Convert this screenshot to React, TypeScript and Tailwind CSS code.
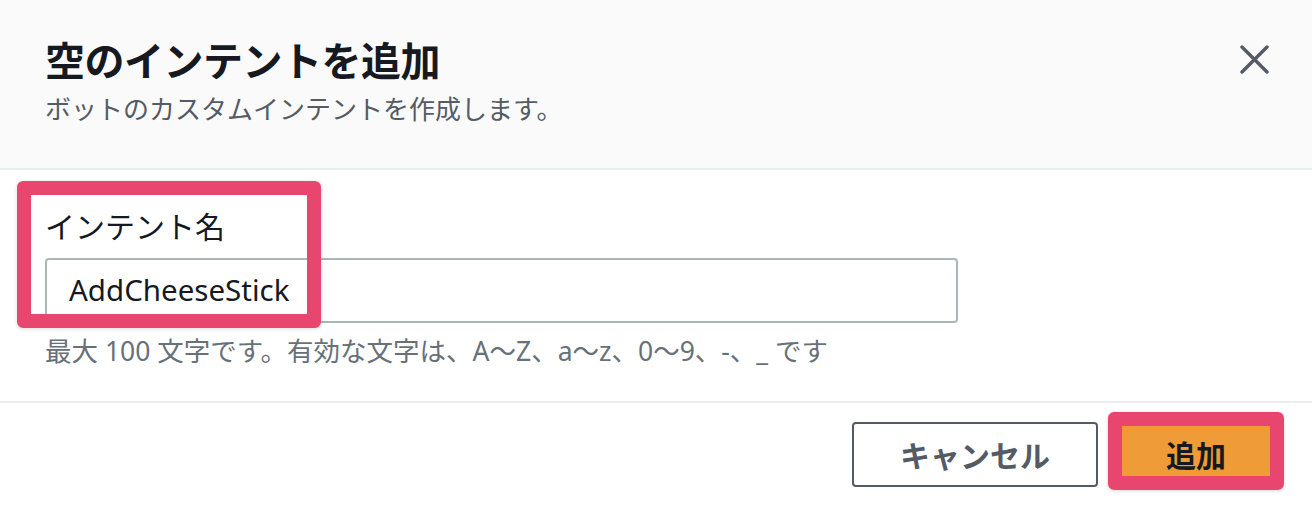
// Highlight frame drawn over the dialog (annotation boxes in the screenshot)
function Highlight({ className }: { className: string }) {
  return (
    <div
      className={`pointer-events-none absolute rounded-[6px] border-[14px] border-[#e8466e] shadow-[0_1px_4px_rgba(0,0,0,0.15)] ${className}`}
    />
  );
}

export default function App() {
  return (
    <div className="relative h-[506px] w-[1312px] overflow-hidden bg-white font-['Noto_Sans','Noto_Sans_CJK_JP',sans-serif] text-[#16191f]">
      {/* Header */}
      <div className="flex h-[170px] items-start justify-between border-b-2 border-[#eaeded] bg-[#fafafa] pl-[45px] pr-[43px] pt-[35px]">
        <div>
          <h2 className="font-['Noto_Sans_CJK_JP',sans-serif] text-[40px] font-bold leading-[48px] tracking-[-0.5px]">
            空のインテントを追加
          </h2>
          <p className="mt-[9px] font-['Noto_Sans_CJK_JP',sans-serif] text-[26px] leading-[32px] text-[#545b64]">
            ボットのカスタムインテントを作成します。
          </p>
        </div>
        <button className="mt-[10px] text-[#545b64]">
          <svg width="29" height="29" viewBox="0 0 29 29" fill="none" stroke="currentColor" strokeWidth="3.4" strokeLinecap="round">
            <path d="M2 2L27 27M27 2L2 27" />
          </svg>
        </button>
      </div>

      {/* Body */}
      <div className="px-[45px] pb-[34px] pt-[37px]">
        <label className="block font-['Noto_Sans_CJK_JP',sans-serif] text-[30px] leading-[36px]">
          インテント名
        </label>
        <div className="mt-[15px] flex h-[65px] w-[913px] items-center rounded-[4px] border-2 border-[#aab7b8] pl-[22px] text-[29.5px]">
          AddCheeseStick
        </div>
        <p className="mt-[12px] text-[26.5px] leading-[32px] text-[#687078]">
          最大 100 文字です。有効な文字は、A〜Z、a〜z、0〜9、-、_ です
        </p>
      </div>

      {/* Footer */}
      <div className="flex justify-end gap-[16px] border-t-2 border-[#eaeded] pr-[34px] pt-[19px]">
        <button className="flex h-[65px] w-[246px] items-center justify-center rounded-[4px] border-2 border-[#545b64] font-['Noto_Sans_CJK_JP',sans-serif] text-[30px] font-bold text-[#545b64]">
          キャンセル
        </button>
        <button className="flex h-[65px] w-[164px] items-center justify-center rounded-[4px] border-2 border-[#e8902b] bg-[#ef9c38] font-['Noto_Sans_CJK_JP',sans-serif] text-[30px] font-bold text-[#16191f]">
          追加
        </button>
      </div>

      <Highlight className="left-[17px] top-[181px] h-[147px] w-[304px]" />
      <Highlight className="left-[1108px] top-[412px] h-[78px] w-[176px]" />
    </div>
  );
}
